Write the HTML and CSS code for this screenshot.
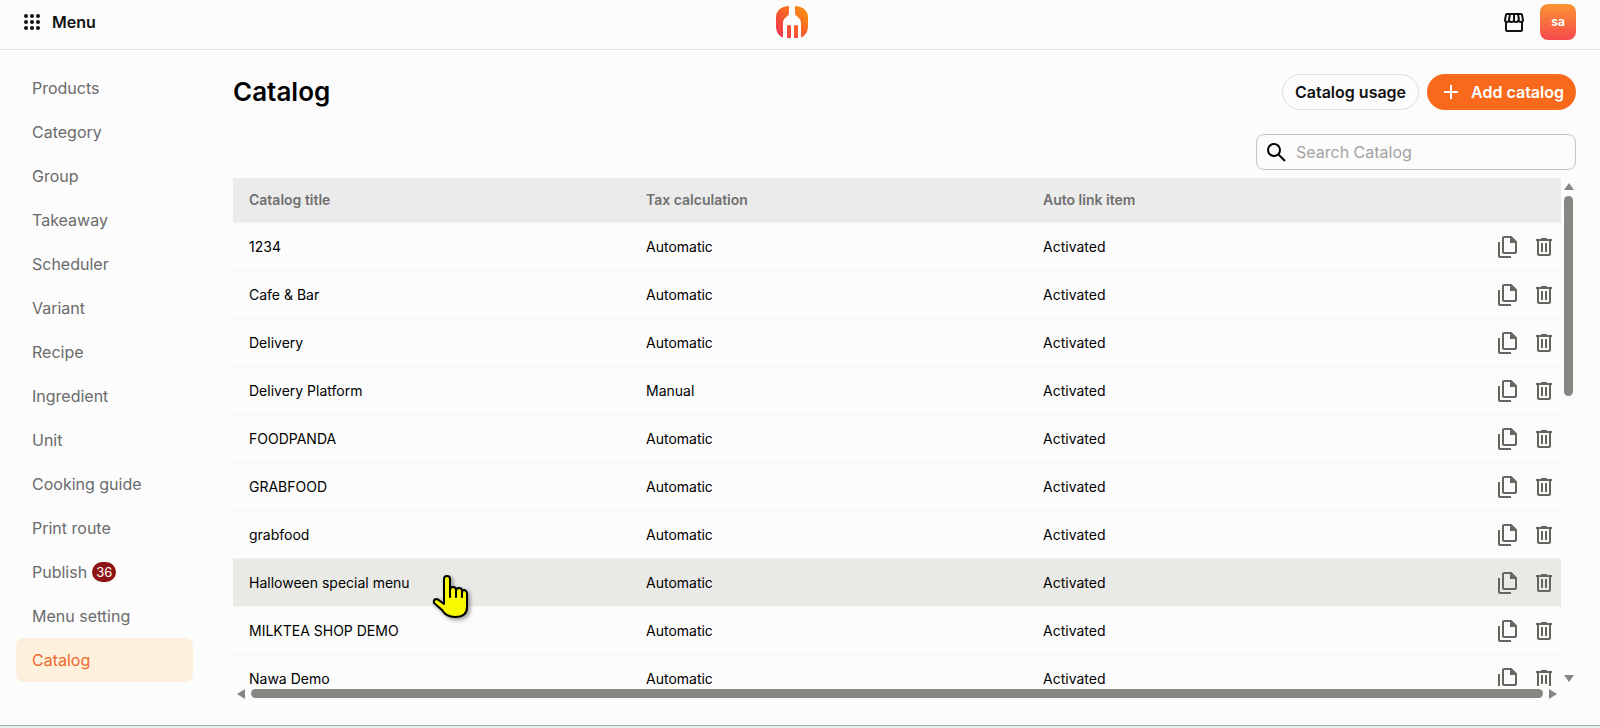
FILE: index.html
```html
<!DOCTYPE html>
<html lang="en">
<head>
  <meta charset="UTF-8" />
  <meta name="viewport" content="width=device-width, initial-scale=1.0"/>
  <title>Catalog</title>
  <link rel="stylesheet" href="styles.css">
</head>
<body>
  <!-- icons used more than once -->
  <svg class="sprite" aria-hidden="true">
    <symbol id="icon-copy" viewBox="0 0 24 24">
      <path d="M8 2h7l5 5v10a1 1 0 0 1-1 1H8a1 1 0 0 1-1-1V3a1 1 0 0 1 1-1z" fill="none" stroke="currentColor" stroke-width="2"/>
      <path d="M14 2v6h6z" fill="currentColor"/>
      <path d="M3 7v14a1 1 0 0 0 1 1h11" fill="none" stroke="currentColor" stroke-width="2"/>
    </symbol>
    <symbol id="icon-trash" viewBox="0 0 24 24">
      <path d="M4 5h16M9 4h6M6 5v14a1 1 0 0 0 1 1h10a1 1 0 0 0 1-1V5M10 8v9M14 8v9" fill="none" stroke="currentColor" stroke-width="2"/>
    </symbol>
  </svg>

  <header class="topbar">
    <button class="menu-btn">
      <svg width="16" height="16" viewBox="0 0 16 16" fill="currentColor">
        <circle cx="2" cy="2" r="2"/><circle cx="8" cy="2" r="2"/><circle cx="14" cy="2" r="2"/>
        <circle cx="2" cy="8" r="2"/><circle cx="8" cy="8" r="2"/><circle cx="14" cy="8" r="2"/>
        <circle cx="2" cy="14" r="2"/><circle cx="8" cy="14" r="2"/><circle cx="14" cy="14" r="2"/>
      </svg>
      Menu
    </button>
    <a class="logo" href="#" aria-label="Home">
      <svg width="32" height="32" viewBox="0 0 32 32">
        <defs>
          <linearGradient id="flame" x1="0" y1="1" x2="1" y2="0">
            <stop offset="0" stop-color="#f02d55"/>
            <stop offset="0.5" stop-color="#f8602a"/>
            <stop offset="1" stop-color="#fb9a0c"/>
          </linearGradient>
        </defs>
        <path fill="url(#flame)" d="M13 0v7c0 4-6 4-6 10v14.500C3 30 0 26 0 20V11C0 5 5 0 13 0zM19 0c8 0 13 5 13 11v9c0 6-3 10-7 11.500V17c0-6-6-6-6-10zM11 32V20q0-1 2-1t2 1v12zM18 32V20q0-1 2-1t2 1v12z"/>
      </svg>
    </a>
    <div class="account">
      <button class="icon-btn store-btn" aria-label="Store">
        <svg width="24" height="24" viewBox="0 0 24 24" fill="none" stroke="currentColor" stroke-width="2" stroke-linejoin="round">
          <path d="M4 12v8q0 1 1 1h14q1 0 1-1v-8"/>
          <path d="M3 10l1-5q0-1 1-1h14q1 0 1 1l1 5q0 2-2 2t-2.500-2q0 2-2.500 2T12 10q0 2-2.500 2T7 10q0 2-2 2t-2-2z"/>
          <path d="M7 10l1-6M12 10V4M17 10l-1-6"/>
        </svg>
      </button>
      <button class="avatar">sa</button>
    </div>
  </header>

  <div class="layout">
    <nav class="sidebar">
      <a href="#">Products</a>
      <a href="#">Category</a>
      <a href="#">Group</a>
      <a href="#">Takeaway</a>
      <a href="#">Scheduler</a>
      <a href="#">Variant</a>
      <a href="#">Recipe</a>
      <a href="#">Ingredient</a>
      <a href="#">Unit</a>
      <a href="#">Cooking guide</a>
      <a href="#">Print route</a>
      <a href="#">Publish <span class="count">36</span></a>
      <a href="#">Menu setting</a>
      <a href="#" class="active">Catalog</a>
    </nav>

    <main class="content">
      <div class="heading">
        <h1>Catalog</h1>
        <div class="actions">
          <button class="btn">Catalog usage</button>
          <button class="btn btn-primary">
            <svg width="24" height="24" viewBox="0 0 24 24" fill="none" stroke="currentColor" stroke-width="2"><path d="M12 5v14M5 12h14"/></svg>
            Add catalog
          </button>
        </div>
      </div>

      <label class="search">
        <svg width="24" height="24" viewBox="0 0 24 24" fill="none" stroke="currentColor" stroke-width="2">
          <circle cx="10" cy="10" r="6"/><path d="M14 14l7 7"/>
        </svg>
        <input type="search" placeholder="Search Catalog" aria-label="Search Catalog">
      </label>

      <div class="table-box">
        <div class="table-view">
          <table>
            <thead>
              <tr><th>Catalog title</th><th>Tax calculation</th><th>Auto link item</th><th class="tools-col"></th></tr>
            </thead>
            <tbody id="rows"></tbody>
          </table>
        </div>
        <div class="scroll-y">
          <svg width="10" height="8" viewBox="0 0 10 8"><path d="M5 0l5 7H0z"/></svg>
          <div class="track"><div class="thumb"></div></div>
          <svg width="10" height="8" viewBox="0 0 10 8"><path d="M0 1h10L5 8z"/></svg>
        </div>
        <div class="scroll-x">
          <svg width="8" height="10" viewBox="0 0 8 10"><path d="M8 0v10L0 5z"/></svg>
          <div class="thumb"></div>
          <svg width="8" height="10" viewBox="0 0 8 10"><path d="M0 0v10l8-5z"/></svg>
        </div>
      </div>
    </main>
  </div>
  <footer class="bottom-line"></footer>

  <script>
    const catalogs = [
      ['1234', 'Automatic'],
      ['Cafe & Bar', 'Automatic'],
      ['Delivery', 'Automatic'],
      ['Delivery Platform', 'Manual'],
      ['FOODPANDA', 'Automatic'],
      ['GRABFOOD', 'Automatic'],
      ['grabfood', 'Automatic'],
      ['Halloween special menu', 'Automatic'],
      ['MILKTEA SHOP DEMO', 'Automatic'],
      ['Nawa Demo', 'Automatic']
    ];
    const hovered = 'Halloween special menu';
    const pointer = `
      <svg class="pointer" width="40" height="50" viewBox="0 0 40 50">
        <path d="M12 27V5q0-3 3-3t3 3v11q0-3 3-3t3 3v1q0-3 3-3t3 3v2q0-3 2-3t3 3v14q0 10-12 10-9 0-13-7L2 29q-1-3 2-4 2 0 4 2l4 3z" fill="#f8f800" stroke="#000" stroke-width="2" stroke-linejoin="round"/>
        <path d="M18 14v9M24 15v8M30 17v6" stroke="#000" stroke-width="2" stroke-linecap="round"/>
      </svg>`;

    const rows = document.getElementById('rows');
    catalogs.forEach(([title, tax]) => {
      const row = document.createElement('tr');
      row.innerHTML = `
        <td><span class="title"></span></td>
        <td>${tax}</td>
        <td>Activated</td>
        <td class="tools-col"><div class="tools">
          <button class="icon-btn" aria-label="Copy"><svg width="24" height="24"><use href="#icon-copy"/></svg></button>
          <button class="icon-btn" aria-label="Delete"><svg width="24" height="24"><use href="#icon-trash"/></svg></button>
        </div></td>`;
      const label = row.querySelector('.title');
      label.textContent = title;
      if (title === hovered) {
        row.classList.add('hovered');
        label.insertAdjacentHTML('beforeend', pointer);
      }
      rows.appendChild(row);
    });
  </script>
</body>
</html>
```

FILE: styles.css
```css
* {
  box-sizing: border-box;
}

body {
  margin: 0;
  height: 100vh;
  display: flex;
  flex-direction: column;
  font-family: Inter, sans-serif;
  font-size: 16px;
  color: #111;
  background: #fcfcfd;
}

button, input {
  font: inherit;
  color: inherit;
  border: none;
  background: none;
  padding: 0;
}

button {
  cursor: pointer;
}

svg {
  display: block;
  flex: none;
}

.sprite {
  position: absolute;
  width: 0;
  height: 0;
}

.topbar {
  display: flex;
  justify-content: space-between;
  align-items: center;
  height: 50px;
  padding: 0 24px 6px;
  border-bottom: 1px solid #e4e4f0;
}

.menu-btn {
  display: flex;
  align-items: center;
  gap: 12px;
  font-weight: 600;
}

.account {
  display: flex;
  align-items: center;
}

.store-btn {
  padding: 0 14px;
}

.avatar {
  width: 36px;
  height: 36px;
  border-radius: 8px;
  background: linear-gradient(to top, #f5494c, #fb9433);
  color: #fff;
  font-size: 12px;
  font-weight: 700;
}

.layout {
  flex: 1;
  min-height: 0;
  display: flex;
}

.sidebar {
  width: 209px;
  flex: none;
  padding: 16px;
}

.sidebar a {
  display: flex;
  align-items: center;
  gap: 5px;
  height: 44px;
  padding: 0 16px;
  border-radius: 8px;
  color: #6b6b6b;
  text-decoration: none;
}

.sidebar a.active {
  background: #fdf0dc;
  color: #f0682c;
}

.count {
  padding: 0 4px;
  border-radius: 10px;
  line-height: 20px;
  font-size: 13px;
  background: #8f1414;
  color: #fff;
}

.content {
  flex: 1;
  min-width: 0;
  display: flex;
  flex-direction: column;
  padding: 24px;
}

.heading {
  display: flex;
  justify-content: space-between;
  align-items: center;
}

h1 {
  margin: 0;
  font-size: 26px;
  line-height: 36px;
  font-weight: 600;
  color: #000;
}

.actions {
  display: flex;
  gap: 8px;
}

.btn {
  display: flex;
  align-items: center;
  gap: 8px;
  height: 36px;
  padding: 0 12px;
  border: 1px solid #dedede;
  border-radius: 18px;
  font-weight: 600;
}

.btn-primary {
  border: none;
  background: #f9691c;
  color: #fff;
}

.search {
  display: flex;
  align-items: center;
  align-self: flex-end;
  gap: 8px;
  width: 320px;
  height: 36px;
  margin: 24px 0 8px;
  padding: 0 7px;
  border: 1px solid #c4c4c8;
  border-radius: 8px;
  color: #000;
}

.search input {
  flex: 1;
  min-width: 0;
  outline: none;
}

.search input::placeholder {
  color: #a3a3a3;
}

.table-box {
  flex: 1;
  min-height: 0;
  display: grid;
  grid-template-columns: 1fr 15px;
  grid-template-rows: 1fr 15px;
}

.table-view {
  min-height: 0;
  overflow: hidden;
}

table {
  width: 100%;
  table-layout: fixed;
  border-collapse: separate;
  border-spacing: 0;
  font-size: 14px;
  color: #000;
}

th, td {
  height: 48px;
  padding: 0 16px;
  text-align: left;
  border-bottom: 1px solid #f3f3ea;
}

th {
  height: 45px;
  padding-bottom: 2px;
  background: #ebebeb;
  color: #707070;
  font-weight: 600;
}

.hovered td {
  background: #e9e9e6;
}

.tools-col {
  width: 137px;
  padding: 0 5px;
}

.tools {
  display: flex;
  justify-content: flex-end;
  gap: 12px;
}

.tools .icon-btn {
  color: #66665f;
}

.title {
  position: relative;
}

.pointer {
  position: absolute;
  left: 183px;
  top: 0;
  filter: drop-shadow(2px 2px 2px rgba(0, 0, 0, 0.4));
}

.scroll-y, .scroll-x {
  display: flex;
  align-items: center;
  fill: #868682;
}

.scroll-y {
  flex-direction: column;
  gap: 5px;
  padding: 5px 0 4px;
}

.scroll-x {
  padding: 0 4px;
  gap: 6px;
}

.track {
  flex: 1;
}

.thumb {
  border-radius: 5px;
  background: #868682;
}

.track .thumb {
  width: 9px;
  height: 200px;
}

.scroll-x .thumb {
  flex: 1;
  height: 9px;
}

.bottom-line {
  height: 3px;
  border-top: 1px solid #a5aaa5;
  background: #e4f2ee;
}
```
